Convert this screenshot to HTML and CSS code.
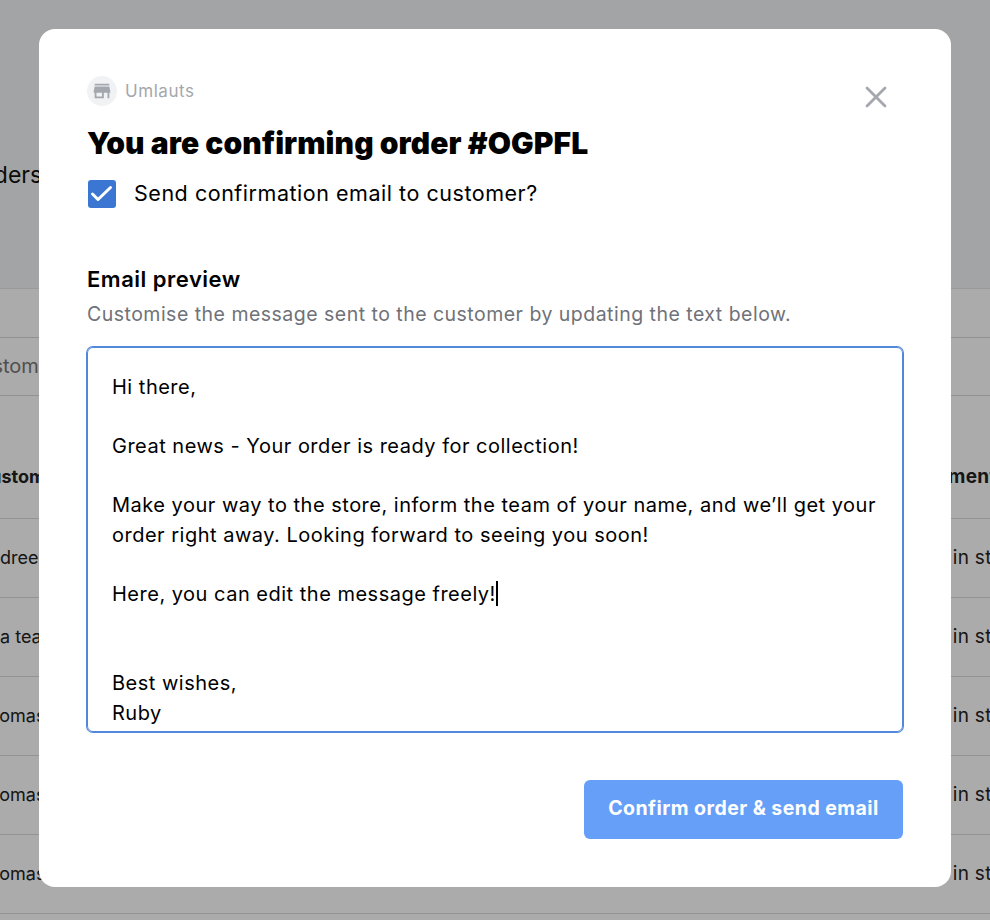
FILE: index.html
```html
<!DOCTYPE html>
<html lang="en">
<head>
<meta charset="utf-8">
<title>Confirm order</title>
<link rel="stylesheet" href="styles.css">
</head>
<body>
<div class="page">
  <header class="page-head"><h1 class="page-title">Orders</h1></header>
  <main class="page-body">
    <div class="search">Customer</div>
    <div class="row row-head"><span>Customer</span><span class="pay">Payment</span></div>
    <div class="row"><span>Andreea</span><span class="pay">Pay in store</span></div>
    <div class="row"><span>Ana team</span><span class="pay">Pay in store</span></div>
    <div class="row"><span>Thomas</span><span class="pay">Pay in store</span></div>
    <div class="row"><span>Thomas</span><span class="pay">Pay in store</span></div>
    <div class="row"><span>Thomas</span><span class="pay">Pay in store</span></div>
  </main>
</div>
<div class="overlay"></div>
<section class="modal">
  <div class="top">
    <div class="brand">
      <span class="brand-icon">
        <svg viewBox="0 0 24 24" width="22" height="22"><path fill="#a4a7ad" d="M20 4H4v2h16V4zm1 10v-2l-1-5H4l-1 5v2h1v6h10v-6h4v6h2v-6h1zm-9 4H6v-4h6v4z"/></svg>
      </span>
      <span class="brand-name">Umlauts</span>
    </div>
    <svg class="close" viewBox="0 0 22 22" width="22" height="22"><path d="M2 2l18 18M20 2L2 20" fill="none" stroke="#a4a7ad" stroke-width="2.8" stroke-linecap="round"/></svg>
  </div>
  <h2 class="title">You are confirming order #OGPFL</h2>
  <label class="check">
    <span class="box"><svg viewBox="0 0 28 28" width="28" height="28"><path d="M4.5 14l5.5 5.5L22.5 7.5" fill="none" stroke="#fff" stroke-width="3" stroke-linecap="round" stroke-linejoin="round"/></svg></span>
    <span class="check-text">Send confirmation email to customer?</span>
  </label>
  <h3 class="preview-title">Email preview</h3>
  <p class="preview-sub">Customise the message sent to the customer by updating the text below.</p>
  <div class="editor">
    <p>Hi there,</p>
    <p class="blank"></p>
    <p>Great news - Your order is ready for collection!</p>
    <p class="blank"></p>
    <p>Make your way to the store, inform the team of your name, and we’ll get your</p>
    <p>order right away. Looking forward to seeing you soon!</p>
    <p class="blank"></p>
    <p>Here, you can edit the message freely!<span class="caret"></span></p>
    <p class="blank"></p>
    <p class="blank"></p>
    <p>Best wishes,</p>
    <p>Ruby</p>
  </div>
  <div class="actions"><button class="confirm" type="button">Confirm order &amp; send email</button></div>
</section>
</body>
</html>
```
FILE: styles.css
```css
* { box-sizing: border-box; }
html, body { margin: 0; height: 920px; overflow: hidden; }
body { background: #fff; font-family: "Inter", "Open Sans", sans-serif; color: #000; }

.page { width: 1013px; margin-left: -23px; }
.page-head { height: 289px; background: #f4f5f8; padding: 157px 0 0 0; border-bottom: 1px solid #e6e6e6; }
.page-title { margin: 0 0 0 -9px; font-size: 23px; line-height: 36px; font-weight: 400; color: #111; }
.page-body { padding-top: 48px; }
.search { height: 59px; border-top: 1px solid #d8d8d8; border-bottom: 1px solid #d8d8d8; margin-left: -11px; font-size: 20px; line-height: 57px; color: #777; }
.row { height: 79px; display: grid; grid-template-columns: 936px 1fr; align-items: center; padding-bottom: 2px; border-bottom: 1px solid #dcdcdc; font-size: 18px; color: #222; white-space: nowrap; }
.row-head { height: 123px; padding-top: 38px; padding-bottom: 0; font-weight: 700; }
.pay { font-size: 19px; letter-spacing: .3px; }

.overlay { position: fixed; inset: 0; background: rgba(0,0,0,.33); }
.modal { position: fixed; left: 39px; top: 29px; width: 912px; height: 858px; background: #fff; border-radius: 16px; padding: 47px 48px 48px; display: flex; flex-direction: column; }
.top { display: flex; justify-content: space-between; align-items: flex-start; height: 30px; }
.brand { display: flex; align-items: center; gap: 8px; }
.brand-icon { width: 30px; height: 30px; border-radius: 50%; background: #f1f2f4; display: flex; align-items: center; justify-content: center; }
.brand-name { font-size: 17px; letter-spacing: .55px; color: #a4a7ad; }
.close { margin: 10px 16px 0 0; }
.title { margin: 15px 0 0; font-weight: 900; font-size: 30px; line-height: 44px; color: #000; letter-spacing: .1px; }
.check { display: flex; align-items: center; gap: 18px; height: 28px; margin-top: 15px; padding-left: 1px; }
.box { width: 28px; height: 28px; border-radius: 3px; background: #3b76d3; display: block; }
.box svg { display: block; }
.check-text { font-size: 21.5px; line-height: 28px; letter-spacing: .53px; padding-bottom: 2px; }
.preview-title { margin: 56px 0 0; font-size: 22px; line-height: 30px; font-weight: 600; letter-spacing: .5px; }
.preview-sub { margin: 5px 0 0; font-size: 19.5px; line-height: 30px; letter-spacing: .48px; color: #6f7278; }
.editor { margin-top: 18px; height: 385px; border: 1px solid #5288da; box-shadow: 0 0 0 1px #5288da; border-radius: 6px; padding: 25px 24px 0; font-size: 20px; letter-spacing: .5px; line-height: 29.6px; overflow: hidden; }
.editor p { margin: 0; white-space: nowrap; }
.editor .blank { height: 29.6px; }
.caret { display: inline-block; width: 2px; height: 25px; background: #000; vertical-align: -5px; margin-left: 0; }
.actions { display: flex; justify-content: flex-end; margin-top: 48px; }
.confirm { width: 319px; height: 59px; border: 0; border-radius: 6px; padding: 0 0 3px; background: #669ff8; color: #fff; font: 700 19.5px "Inter", sans-serif; letter-spacing: .46px; }
```
